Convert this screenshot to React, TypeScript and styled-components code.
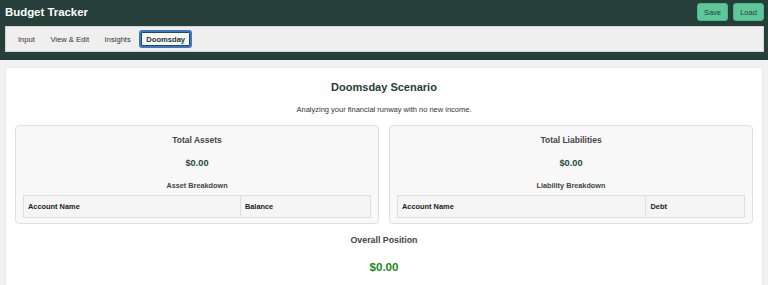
import styled, { createGlobalStyle } from 'styled-components'

const GlobalStyle = createGlobalStyle`
  body {
    margin: 0;
    background: #f1f1f1;
    font-family: 'Liberation Sans', Arial, Helvetica, sans-serif;
  }
`

const Header = styled.header`
  background: #263f3a;
  padding: 3px 4px 8px 5px;
`

const TopRow = styled.div`
  display: flex;
  align-items: center;
  justify-content: space-between;
  height: 18px;
`

const Brand = styled.h1`
  margin: 0;
  color: #ffffff;
  font-size: 11.4px;
  font-weight: bold;
`

const Actions = styled.div`
  display: flex;
  gap: 5px;
`

const ActionButton = styled.button`
  height: 18px;
  width: 31px;
  padding: 0;
  border: 1px solid #4fb488;
  border-radius: 3px;
  background: #5ec797;
  color: #264040;
  font-family: inherit;
  font-size: 7.5px;
`

const Nav = styled.nav`
  display: flex;
  align-items: center;
  gap: 1.5px;
  height: 24px;
  margin-top: 5px;
  padding-left: 5px;
  background: #efefef;
  border: 1px solid #d4d4d4;
`

const Tab = styled.button<{ $active?: boolean }>`
  height: 18px;
  padding: 0 5px;
  border: 2px solid ${(p) => (p.$active ? '#3a78d0' : 'transparent')};
  border-radius: 3px;
  background: ${(p) => (p.$active ? '#f7f7f7' : 'transparent')};
  box-shadow: ${(p) => (p.$active ? 'inset 0 0 0 1px #2b4a44' : 'none')};
  color: ${(p) => (p.$active ? '#1f3a34' : '#333333')};
  font-family: inherit;
  font-size: 7.6px;
  font-weight: ${(p) => (p.$active ? 'bold' : 'normal')};
`

const Page = styled.main`
  padding: 8px 6px 0;
`

const Card = styled.section`
  background: #ffffff;
  border-radius: 4px;
  box-shadow: 0 1px 3px rgba(0, 0, 0, 0.08);
  padding: 12px 9px 20px;
  text-align: center;
`

const Title = styled.h2`
  margin: 0;
  line-height: 14px;
  font-size: 11px;
  font-weight: bold;
  color: #1f3d36;
`

const Subtitle = styled.p`
  margin: 11px 0 0;
  line-height: 10px;
  font-size: 7.5px;
  color: #333333;
`

const Panels = styled.div`
  display: grid;
  grid-template-columns: 1fr 1fr;
  gap: 10px;
  margin-top: 10px;
`

const Panel = styled.div`
  background: #f8f8f8;
  border: 1px solid #e0e0e0;
  border-radius: 4px;
  padding: 8px 7px 5px;
`

const PanelTitle = styled.h3`
  margin: 0;
  line-height: 12px;
  font-size: 8.5px;
  font-weight: bold;
  color: #444444;
`

const Amount = styled.div<{ $tone?: 'dark' | 'green'; $size?: number }>`
  margin-top: ${(p) => (p.$tone === 'green' ? 14 : 11)}px;
  line-height: ${(p) => (p.$tone === 'green' ? 14 : 12)}px;
  font-size: ${(p) => p.$size ?? 9.2}px;
  font-weight: bold;
  color: ${(p) => (p.$tone === 'green' ? '#1a8a1a' : '#254a3f')};
`

const Breakdown = styled.h4`
  margin: 12px 0 4px;
  line-height: 10px;
  font-size: 7.3px;
  font-weight: bold;
  color: #444444;
`

const Table = styled.table`
  width: 100%;
  border-collapse: collapse;
  text-align: left;
`

const HeadCell = styled.th<{ $width?: string }>`
  width: ${(p) => p.$width ?? 'auto'};
  height: 21px;
  padding: 0 4px;
  border: 1px solid #dedede;
  background: #f5f5f5;
  font-size: 7.4px;
  font-weight: bold;
  color: #222222;
`

const Overall = styled.h3`
  margin: 10px 0 0;
  line-height: 12px;
  font-size: 8.8px;
  font-weight: bold;
  color: #444444;
`

const tabs = ['Input', 'View & Edit', 'Insights', 'Doomsday']

interface SummaryProps {
  title: string
  label: string
  column: string
  nameWidth: string
}

function Summary({ title, label, column, nameWidth }: SummaryProps) {
  return (
    <Panel>
      <PanelTitle>{title}</PanelTitle>
      <Amount>$0.00</Amount>
      <Breakdown>{label}</Breakdown>
      <Table>
        <thead>
          <tr>
            <HeadCell $width={nameWidth}>Account Name</HeadCell>
            <HeadCell>{column}</HeadCell>
          </tr>
        </thead>
      </Table>
    </Panel>
  )
}

export default function App() {
  return (
    <>
      <GlobalStyle />
      <Header>
        <TopRow>
          <Brand>Budget Tracker</Brand>
          <Actions>
            <ActionButton>Save</ActionButton>
            <ActionButton>Load</ActionButton>
          </Actions>
        </TopRow>
        <Nav>
          {tabs.map((tab) => (
            <Tab key={tab} $active={tab === 'Doomsday'}>
              {tab}
            </Tab>
          ))}
        </Nav>
      </Header>

      <Page>
        <Card>
          <Title>Doomsday Scenario</Title>
          <Subtitle>Analyzing your financial runway with no new income.</Subtitle>
          <Panels>
            <Summary title="Total Assets" label="Asset Breakdown" column="Balance" nameWidth="62.5%" />
            <Summary
              title="Total Liabilities"
              label="Liability Breakdown"
              column="Debt"
              nameWidth="71.6%"
            />
          </Panels>
          <Overall>Overall Position</Overall>
          <Amount $tone="green" $size={11.6}>
            $0.00
          </Amount>
        </Card>
      </Page>
    </>
  )
}
